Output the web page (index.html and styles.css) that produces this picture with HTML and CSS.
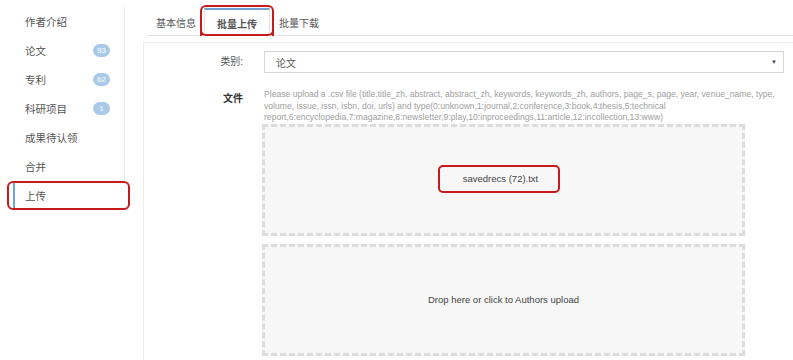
FILE: index.html
```html
<!DOCTYPE html>
<html>
  <head>
    <meta charset="UTF-8" />
    <title>批量上传</title>
    <link rel="stylesheet" href="styles.css">
  </head>

  <body>
    <div class="sidebar">
      <ul class="nav">
        <li><a>作者介绍</a></li>
        <li><a>论文 <span class="badge">93</span></a></li>
        <li><a>专利 <span class="badge">62</span></a></li>
        <li><a>科研项目 <span class="badge">1</span></a></li>
        <li><a>成果待认领</a></li>
        <li><a>合并</a></li>
        <li class="marked"><a class="active">上传</a></li>
      </ul>
    </div>

    <div class="main">
      <ul class="tabs">
        <li><a>基本信息</a></li>
        <li class="marked"><a class="active">批量上传</a></li>
        <li><a>批量下载</a></li>
      </ul>

      <div class="panel">
        <div class="form-row">
          <label class="form-label">类别:</label>
          <div class="form-control">
            <div class="select">
              <span>论文</span>
              <span class="caret">&#9660;</span>
            </div>
          </div>
        </div>

        <div class="form-row file-row">
          <label class="form-label bold">文件</label>
          <div class="form-control">
            <p class="help">Please upload a .csv file (title,title_zh, abstract, abstract_zh, keywords, keywords_zh, authors, page_s, page, year, venue_name, type, volume, issue, issn, isbn, doi, urls) and type(0:unknown,1:journal,2:conference,3:book,4:thesis,5:technical report,6:encyclopedia,7:magazine,8:newsletter,9:play,10:inproceedings,11:article,12:incollection,13:www)</p>
            <div class="dropzone">
              <span class="file-name">savedrecs (72).txt</span>
            </div>
            <div class="dropzone">
              <span>Drop here or click to Authors upload</span>
            </div>
          </div>
        </div>
      </div>
    </div>
  </body>
</html>
```

FILE: styles.css
```css
body {
  margin: 0;
  padding: 0;
  font-family: "Liberation Sans", Arial, "Noto Sans CJK SC", sans-serif;
  font-size: 10px;
  color: #555;
  display: flex;
  overflow: hidden;
  height: 360px;
  background-color: #fff;
}

ul {
  list-style: none;
  margin: 0;
  padding: 0;
}

/* sidebar */

.sidebar {
  width: 125px;
  flex-shrink: 0;
}

.nav {
  padding-top: 7px;
}

.nav li a {
  display: flex;
  align-items: center;
  justify-content: space-between;
  height: 29px;
  padding: 0 14px 0 25px;
  border-right: 1px solid #e8e8e8;
  font-size: 10.5px;
  color: #555;
}

.badge {
  background-color: #a9c9e8;
  color: #fff;
  font-size: 8px;
  border-radius: 7px;
  min-width: 9px;
  padding: 2px 4px;
  text-align: center;
  line-height: 9px;
}

.nav li.marked {
  margin: 0 -5px 0 7px;
  padding: 0 4px;
  border: 2px solid #c81a1a;
  border-radius: 6px;
}

.nav li.marked a {
  height: 25px;
  padding-left: 10px;
  border-right: none;
  border-left: 2px solid #6fa3d8;
}

/* main */

.main {
  flex: 1;
  padding-left: 18px;
  margin-right: -6px;
}

.tabs {
  display: flex;
  align-items: flex-end;
  margin-left: 4px;
  padding-top: 5px;
  border-bottom: 1px solid #e2e2e2;
  height: 30px;
}

.tabs li a {
  display: flex;
  align-items: center;
  height: 26px;
  padding: 0 8px 0 9px;
  font-size: 10px;
  color: #555;
}

.tabs li.marked {
  margin: 0 -4px -1px;
  padding: 1px 2px 0;
  border: 2px solid #c81a1a;
  border-bottom: none;
  border-radius: 6px 6px 0 0;
  align-self: stretch;
  display: flex;
  align-items: flex-end;
  position: relative;
}

.tabs li.marked::after {
  content: "";
  position: absolute;
  left: -2px;
  right: -2px;
  bottom: 0;
  height: 6px;
  border: 2px solid #c81a1a;
  border-top: none;
  border-radius: 0 0 6px 6px;
}

.tabs li a.active {
  background-color: #fff;
  border: 1px solid #e2e2e2;
  border-top: 2px solid #6fa3d8;
  border-bottom: none;
  padding: 0 12px;
  height: 26px;
  font-weight: bold;
}

.panel {
  margin-top: 6px;
  border: 1px solid #ececec;
  border-bottom: none;
  height: 320px;
  padding-top: 8px;
}

.form-row {
  display: flex;
}

.form-label {
  width: 99px;
  flex-shrink: 0;
  text-align: right;
  padding-right: 21px;
  font-size: 10px;
  color: #555;
  line-height: 22px;
}

.form-label.bold {
  font-weight: bold;
  color: #333;
  line-height: 12px;
  padding-top: 4px;
}

.form-control {
  flex: 1;
  padding-right: 14px;
}

.select {
  display: flex;
  justify-content: space-between;
  align-items: center;
  height: 20px;
  border: 1px solid #d6d6d6;
  padding: 0 6px 0 11px;
  font-size: 10px;
  color: #555;
}

.caret {
  font-size: 6px;
  color: #444;
}

.file-row {
  margin-top: 16px;
}

.help {
  margin: 0;
  padding: 0 6px 0 0;
  font-size: 8.6px;
  line-height: 11.5px;
  color: #a0a0a0;
}

.dropzone {
  width: 477px;
  height: 106px;
  margin-left: -2px;
  margin-bottom: 8px;
  border: 3px dashed #dcdcdc;
  background-color: #f7f7f7;
  display: flex;
  align-items: center;
  justify-content: center;
  font-size: 9.5px;
  color: #444;
}

.file-name {
  display: inline-block;
  width: 122px;
  height: 28px;
  line-height: 24px;
  text-align: center;
  padding-left: 4px;
  box-sizing: border-box;
  border: 2px solid #c81a1a;
  border-radius: 5px;
  margin: 0 0 2px -10px;
}
```
